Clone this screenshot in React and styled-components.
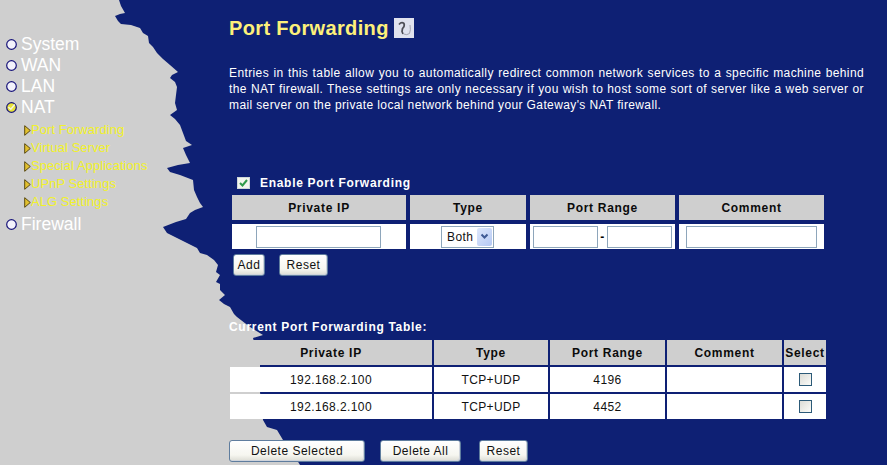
import React from "react";
import styled, { createGlobalStyle } from "styled-components";

const Global = createGlobalStyle`
  html, body { margin: 0; padding: 0; background: #0e2074; }
  body { font-family: "Liberation Sans", Arial, sans-serif; }
`;

const Page = styled.div`
  position: relative;
  width: 887px;
  height: 465px;
  overflow: hidden;
  background: #0e2074;
  display: grid;
  grid-template-columns: 229px 658px;
`;

const Torn = styled.svg`
  position: absolute;
  left: 0;
  top: 0;
`;

const Nav = styled.nav`
  position: relative;
  padding-top: 34px;
  display: flex;
  flex-direction: column;
`;

const NavItem = styled.div`
  height: 21px;
  display: flex;
  align-items: center;
  gap: 3px;
  padding-left: 5px;
  color: #fff;
  font-size: 17.5px;
  line-height: 21px;
`;

const SubList = styled.div`
  display: flex;
  flex-direction: column;
  padding: 3px 0 3px;
`;

const SubItem = styled.div`
  height: 18px;
  display: flex;
  align-items: center;
  padding-left: 24px;
  color: #f2f22a;
  font-size: 13px;
  line-height: 18px;
  letter-spacing: 0.05px;
`;

const Main = styled.main`
  position: relative;
  display: flex;
  flex-direction: column;
`;

const TitleRow = styled.div`
  height: 24px;
  margin-top: 16px;
  display: flex;
  align-items: center;
  gap: 5px;
`;

const Title = styled.h1`
  margin: 0;
  color: #fdf07a;
  font-size: 20px;
  font-weight: bold;
  letter-spacing: 0.35px;
  line-height: 24px;
`;

const Intro = styled.p`
  margin: 25px 0 0;
  width: 635px;
  color: #fff;
  font-size: 12px;
  line-height: 16px;
  letter-spacing: 0.38px;
  text-align: justify;
`;

const EnableRow = styled.label`
  margin-top: 62px;
  height: 16px;
  padding-left: 8px;
  display: flex;
  align-items: center;
  gap: 10px;
  color: #fff;
  font-size: 12px;
  font-weight: bold;
  letter-spacing: 0.7px;
`;

const CheckBox = styled.span`
  width: 11px;
  height: 10px;
  border: 1px solid #cfd8d8;
  background: #f2f5ee;
  display: flex;
  align-items: center;
  justify-content: center;
`;

const Grid = styled.table`
  border-collapse: separate;
  border-spacing: ${(p) => p.$gap}px;
  table-layout: fixed;
  margin: ${(p) => p.$margin};
  width: 600px;
`;

const Col = styled.col`
  width: ${(p) => p.$w}px;
`;

const Head = styled.th`
  height: 25px;
  padding: 0;
  background: #cfcfcf;
  color: #0b0b0b;
  font-size: 12px;
  font-weight: bold;
  letter-spacing: 0.7px;
  text-align: center;
  white-space: nowrap;
`;

const Cell = styled.td`
  height: 25px;
  padding: 0;
  background: #fff;
  color: #111;
  font-size: 12px;
  letter-spacing: 0.4px;
  text-align: center;
  vertical-align: middle;
`;

const FieldWrap = styled.div`
  height: 25px;
  padding-right: ${(p) => p.$nudge || 0}px;
  display: flex;
  align-items: center;
  justify-content: center;
  gap: 2px;
  color: #000;
  font-size: 12px;
  font-weight: bold;
`;

const Field = styled.input`
  box-sizing: border-box;
  width: ${(p) => p.$w}px;
  height: 22px;
  padding: 0;
  border: 1px solid #8ea6bb;
  background: #fff;
  outline: none;
`;

const Select = styled.div`
  box-sizing: border-box;
  width: 53px;
  height: 22px;
  border: 1px solid #8ea6bb;
  padding: 1px 1px 1px 5px;
  display: flex;
  align-items: center;
  justify-content: space-between;
  background: #fff;
  color: #111;
  font-size: 12px;
  font-weight: normal;
  letter-spacing: 0.4px;
`;

const SelectArrow = styled.span`
  width: 15px;
  height: 18px;
  border-radius: 2px;
  background: linear-gradient(135deg, #dfe8fb, #b4c8f4);
  display: flex;
  align-items: center;
  justify-content: center;
`;

const ButtonRow = styled.div`
  display: flex;
  margin: ${(p) => p.$margin};
`;

const Btn = styled.button`
  box-sizing: border-box;
  width: ${(p) => p.$w}px;
  height: 22px;
  margin-left: ${(p) => p.$ml || 0}px;
  padding: 0;
  border: 1px solid #5f7d9e;
  border-radius: 3px;
  background: linear-gradient(180deg, #ffffff 0%, #f6f6f0 70%, #dcdcd4 100%);
  box-shadow: inset -1px -1px 0 #cfd4dc;
  color: #111;
  font-family: "Liberation Sans", Arial, sans-serif;
  font-size: 12px;
  letter-spacing: 0.5px;
`;

const TableCaption = styled.div`
  margin-top: 44px;
  height: 14px;
  color: #fff;
  font-size: 12px;
  font-weight: bold;
  line-height: 14px;
  letter-spacing: 0.7px;
`;

const SelectBox = styled.input`
  appearance: none;
  display: block;
  box-sizing: border-box;
  width: 13px;
  height: 13px;
  margin: 0 auto;
  border: 1px solid #2c5a78;
  background: linear-gradient(135deg, #dcdcd6, #fbfbf8);
`;

const Bullet = ({ active }) => (
  <svg width="13" height="13" viewBox="0 0 13 13">
    <circle cx="6.5" cy="6.5" r="4.8" fill={active ? "#e8e23a" : "#f3f2fb"} stroke="#17137a" strokeWidth="1.2" />
    {active && <path d="M3.4 6 L5.8 8.2 L9.8 3.6" fill="none" stroke="#f6f6e2" strokeWidth="1.5" />}
  </svg>
);

const Arrow = () => (
  <svg width="7" height="11" viewBox="0 0 7 11">
    <path d="M0.7 0.7 L6.3 5.5 L0.7 10.3Z" fill="#e2c02e" stroke="#5a4a12" strokeWidth="1" />
  </svg>
);

const Help = () => (
  <svg width="20" height="20" viewBox="0 0 20 20">
    <rect width="20" height="20" fill="#e0e2ee" />
    <path d="M5 6.5 Q7.5 3.5 10 5.5 Q11 8 8.5 10.5 L8 13.5 L9 16" fill="none" stroke="#4e4e56" strokeWidth="1.7" />
    <path d="M9.5 16 Q13 17.5 15.5 15.5 Q17 12 16 7" fill="none" stroke="#a2a2ae" strokeWidth="1" />
  </svg>
);

const edge = [
  [119,0],[121,6],[125,13],[120,14],[115,16],[118,21],[121,24],[131,25],[140,28],[143,33],[148,36],[149,43],[153,47],[157,53],[163,59],[170,65],[178,72],[172,75],[170,78],[175,82],[177,87],[176,95],[175,103],[177,110],[170,115],[175,119],[180,125],[183,133],[186,141],[192,145],[183,148],[186,155],[190,163],[178,165],[167,168],[170,172],[180,175],[193,180],[194,190],[197,197],[200,203],[203,207],[195,210],[190,213],[186,219],[176,222],[163,227],[167,233],[177,238],[187,243],[197,248],[200,253],[207,255],[214,260],[218,265],[216,272],[220,275],[216,282],[220,284],[220,290],[225,295],[219,300],[224,304],[230,307],[234,314],[237,317],[250,327],[263,335],[253,338],[260,365],[260,392],[263,420],[267,427],[277,430],[283,440],[292,452],[300,465],[0,465],[0,0],
].map((p) => p.join(",")).join(" ");

const entryHeads = [["Private IP", 174], ["Type", 116], ["Port Range", 145], ["Comment", 145]];
const listHeads = [["Private IP", 202], ["Type", 114], ["Port Range", 115], ["Comment", 115], ["Select", 42]];
const rows = [["192.168.2.100", "TCP+UDP", "4196"], ["192.168.2.100", "TCP+UDP", "4452"]];
const subs = ["Port Forwarding", "Virtual Server", "Special Applications", "UPnP Settings", "ALG Settings"];

export default function App() {
  return (
    <Page>
      <Global />
      <Torn width="887" height="465" viewBox="0 0 887 465">
        <polygon points={edge} fill="#cfcfcf" />
      </Torn>
      <Nav>
        {["System", "WAN", "LAN"].map((t) => (
          <NavItem key={t}><Bullet />{t}</NavItem>
        ))}
        <NavItem><Bullet active />NAT</NavItem>
        <SubList>
          {subs.map((s) => (
            <SubItem key={s}><Arrow />{s}</SubItem>
          ))}
        </SubList>
        <NavItem><Bullet />Firewall</NavItem>
      </Nav>
      <Main>
        <TitleRow>
          <Title>Port Forwarding</Title>
          <Help />
        </TitleRow>
        <Intro>
          Entries in this table allow you to automatically redirect common network services to a specific machine behind the NAT firewall. These settings are only necessary if you wish to host some sort of server like a web server or mail server on the private local network behind your Gateway's NAT firewall.
        </Intro>
        <EnableRow>
          <CheckBox>
            <svg width="9" height="8" viewBox="0 0 9 8">
              <path d="M1 4 L3.5 6.5 L8 1" fill="none" stroke="#2f9a4a" strokeWidth="2" />
            </svg>
          </CheckBox>
          Enable Port Forwarding
        </EnableRow>
        <Grid $gap={4} $margin="0 0 0 -1px">
          <colgroup>
            {entryHeads.map(([h, w]) => <Col key={h} $w={w} />)}
          </colgroup>
          <thead>
            <tr>{entryHeads.map(([h]) => <Head key={h}>{h}</Head>)}</tr>
          </thead>
          <tbody>
            <tr>
              <Cell><FieldWrap $nudge={1}><Field $w={125} /></FieldWrap></Cell>
              <Cell>
                <FieldWrap $nudge={1}>
                  <Select>
                    Both
                    <SelectArrow>
                      <svg width="9" height="7" viewBox="0 0 9 7">
                        <path d="M1.5 1.5 L4.5 4.5 L7.5 1.5" fill="none" stroke="#3f5a94" strokeWidth="2" />
                      </svg>
                    </SelectArrow>
                  </Select>
                </FieldWrap>
              </Cell>
              <Cell><FieldWrap><Field $w={65} />-<Field $w={65} /></FieldWrap></Cell>
              <Cell><FieldWrap><Field $w={131} /></FieldWrap></Cell>
            </tr>
          </tbody>
        </Grid>
        <ButtonRow $margin="1px 0 0 4px">
          <Btn $w={32}>Add</Btn>
          <Btn $w={49} $ml={14}>Reset</Btn>
        </ButtonRow>
        <TableCaption>Current Port Forwarding Table:</TableCaption>
        <Grid $gap={2} $margin="4px 0 0 -1px">
          <colgroup>
            {listHeads.map(([h, w]) => <Col key={h} $w={w} />)}
          </colgroup>
          <thead>
            <tr>{listHeads.map(([h]) => <Head key={h}>{h}</Head>)}</tr>
          </thead>
          <tbody>
            {rows.map((r) => (
              <tr key={r[2]}>
                {r.map((c, i) => <Cell key={i}>{c}</Cell>)}
                <Cell />
                <Cell><SelectBox type="checkbox" /></Cell>
              </tr>
            ))}
          </tbody>
        </Grid>
        <ButtonRow $margin="19px 0 0 0">
          <Btn $w={136}>Delete Selected</Btn>
          <Btn $w={81} $ml={15}>Delete All</Btn>
          <Btn $w={49} $ml={18}>Reset</Btn>
        </ButtonRow>
      </Main>
    </Page>
  );
}
